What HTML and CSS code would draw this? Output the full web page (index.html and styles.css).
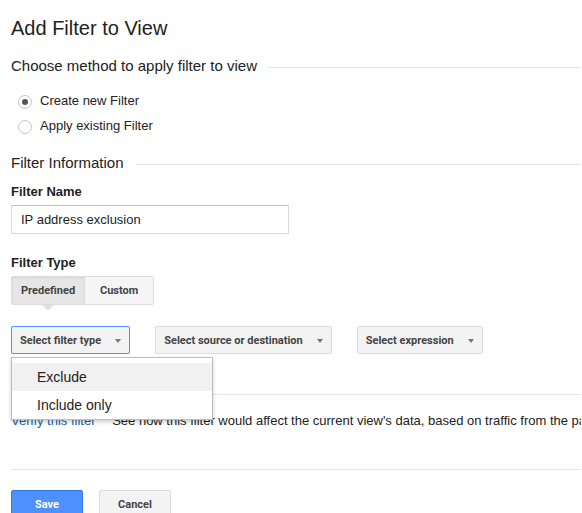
FILE: index.html
```html
<!DOCTYPE html>
<html>
<head>
<meta charset="utf-8">
<link rel="stylesheet" href="styles.css">
</head>
<body>
<div class="page">
  <h1 class="title">Add Filter to View</h1>

  <div class="section-head first">
    <span class="section-title">Choose method to apply filter to view</span>
    <span class="rule"></span>
  </div>

  <div class="radios">
    <label class="radio-row"><span class="radio checked"></span><span>Create new Filter</span></label>
    <label class="radio-row"><span class="radio"></span><span>Apply existing Filter</span></label>
  </div>

  <div class="section-head info">
    <span class="section-title">Filter Information</span>
    <span class="rule"></span>
  </div>

  <div class="label name-label">Filter Name</div>
  <div class="input">IP address exclusion</div>

  <div class="label type-label">Filter Type</div>
  <div class="tabs">
    <div class="tab active">Predefined</div>
    <div class="tab">Custom</div>
  </div>

  <div class="selects">
    <div class="select-wrap">
      <div class="select focused"><span>Select filter type</span><span class="caret"></span></div>
      <div class="menu">
        <div class="menu-item hover">Exclude</div>
        <div class="menu-item">Include only</div>
      </div>
    </div>
    <div class="select"><span>Select source or destination</span><span class="caret"></span></div>
    <div class="select"><span>Select expression</span><span class="caret"></span></div>
  </div>

  <div class="verify">
    <a class="link">Verify this filter</a>
    <span class="verify-text">See how this filter would affect the current view's data, based on traffic from the past seven days.</span>
  </div>

  <div class="actions">
    <div class="btn primary">Save</div>
    <div class="btn">Cancel</div>
  </div>
</div>
</body>
</html>
```

FILE: styles.css
```css
html, body {
  margin: 0;
  padding: 0;
  background: #fff;
}
body {
  width: 582px;
  height: 513px;
  overflow: hidden;
  font-family: "Liberation Sans", Arial, sans-serif;
  color: #222;
}
.page {
  padding: 16px 1px 0 11px;
}
.title {
  margin: 0;
  font-size: 20px;
  line-height: 24px;
  font-weight: normal;
  color: #222;
}
.section-head {
  display: flex;
  align-items: center;
}
.section-head.first {
  margin-top: 17px;
}
.section-head.info {
  margin-top: 16px;
}
.section-title {
  font-size: 15px;
  line-height: 18px;
  color: #222;
  white-space: nowrap;
}
.rule {
  flex: 1;
  height: 1px;
  background: #e3e3e3;
  margin-left: 12px;
  margin-top: 2px;
}
.radios {
  margin-top: 13px;
  padding-left: 7px;
}
.radio-row {
  display: flex;
  align-items: center;
  height: 25px;
  font-size: 13px;
  color: #222;
}
.radio {
  box-sizing: border-box;
  width: 14px;
  height: 14px;
  border: 1px solid #c6c6c6;
  border-radius: 50%;
  margin-right: 8px;
  margin-top: 2px;
  background: #fff;
  display: flex;
  align-items: center;
  justify-content: center;
}
.radio.checked::after {
  content: "";
  width: 6px;
  height: 6px;
  border-radius: 50%;
  background: #555;
}
.label {
  font-size: 13px;
  line-height: 16px;
  font-weight: bold;
  color: #222;
}
.name-label {
  margin-top: 12px;
}
.input {
  box-sizing: border-box;
  margin-top: 5px;
  width: 278px;
  height: 29px;
  border: 1px solid #d9d9d9;
  border-top-color: #c0c0c0;
  padding: 0 9px;
  font-size: 13px;
  line-height: 27px;
  color: #222;
}
.type-label {
  margin-top: 21px;
}
.tabs {
  margin-top: 5px;
  display: inline-flex;
  border: 1px solid #dcdcdc;
  border-radius: 2px;
  height: 27px;
}
.tab {
  position: relative;
  min-width: 50px;
  padding: 0 9px;
  text-align: center;
  font-family: Roboto, "Liberation Sans", sans-serif;
  font-weight: bold;
  font-size: 11px;
  line-height: 27px;
  color: #444;
  background: #f5f5f5;
}
.tab.active {
  background: #e6e6e6;
  border-right: 1px solid #dcdcdc;
  box-shadow: inset 0 1px 2px rgba(0,0,0,0.08);
}
.tab.active::after {
  content: "";
  position: absolute;
  left: 50%;
  top: 28px;
  margin-left: -6px;
  border-left: 6px solid transparent;
  border-right: 6px solid transparent;
  border-top: 6px solid #e2e2e2;
}
.selects {
  display: flex;
  gap: 25px;
  margin-top: 21px;
}
.select-wrap {
  position: relative;
}
.select {
  box-sizing: border-box;
  height: 28px;
  display: flex;
  align-items: center;
  padding: 0 8px 0 8px;
  border: 1px solid #dcdcdc;
  border-radius: 2px;
  background: #f3f3f3;
  font-family: Roboto, "Liberation Sans", sans-serif;
  font-weight: bold;
  font-size: 11px;
  color: #444;
  white-space: nowrap;
}
.select.focused {
  border-color: #4d90fe;
}
.caret {
  margin-left: 14px;
  width: 0;
  height: 0;
  border-left: 3.5px solid transparent;
  border-right: 3.5px solid transparent;
  border-top: 4px solid #777;
  margin-top: 2px;
}
.menu {
  position: absolute;
  left: 0;
  top: 31px;
  width: 202px;
  box-sizing: border-box;
  background: #fff;
  border: 1px solid #bdbdbd;
  box-shadow: 0 2px 4px rgba(0,0,0,0.2);
  padding: 5px 0 0;
  z-index: 2;
}
.menu-item {
  height: 28px;
  line-height: 28px;
  padding-left: 25px;
  font-size: 14px;
  color: #222;
}
.menu-item.hover {
  background: #f1f1f1;
}
.verify {
  margin-top: 40px;
  border-top: 1px solid #e3e3e3;
  border-bottom: 1px solid #e3e3e3;
  padding: 18px 0 40px;
  font-size: 13px;
  line-height: 16px;
  white-space: nowrap;
  overflow: hidden;
}
.link {
  color: #1a64a8;
  margin-right: 13px;
}
.verify-text {
  color: #222;
}
.actions {
  display: flex;
  gap: 16px;
  margin-top: 20px;
}
.btn {
  box-sizing: border-box;
  width: 72px;
  height: 30px;
  border: 1px solid #dcdcdc;
  border-radius: 2px;
  background: #f3f3f3;
  text-align: center;
  line-height: 28px;
  font-family: Roboto, "Liberation Sans", sans-serif;
  font-weight: bold;
  font-size: 11px;
  color: #444;
}
.btn.primary {
  width: 72px;
  background: #4d90fe;
  border-color: #3079ed;
  color: #fff;
}
```
